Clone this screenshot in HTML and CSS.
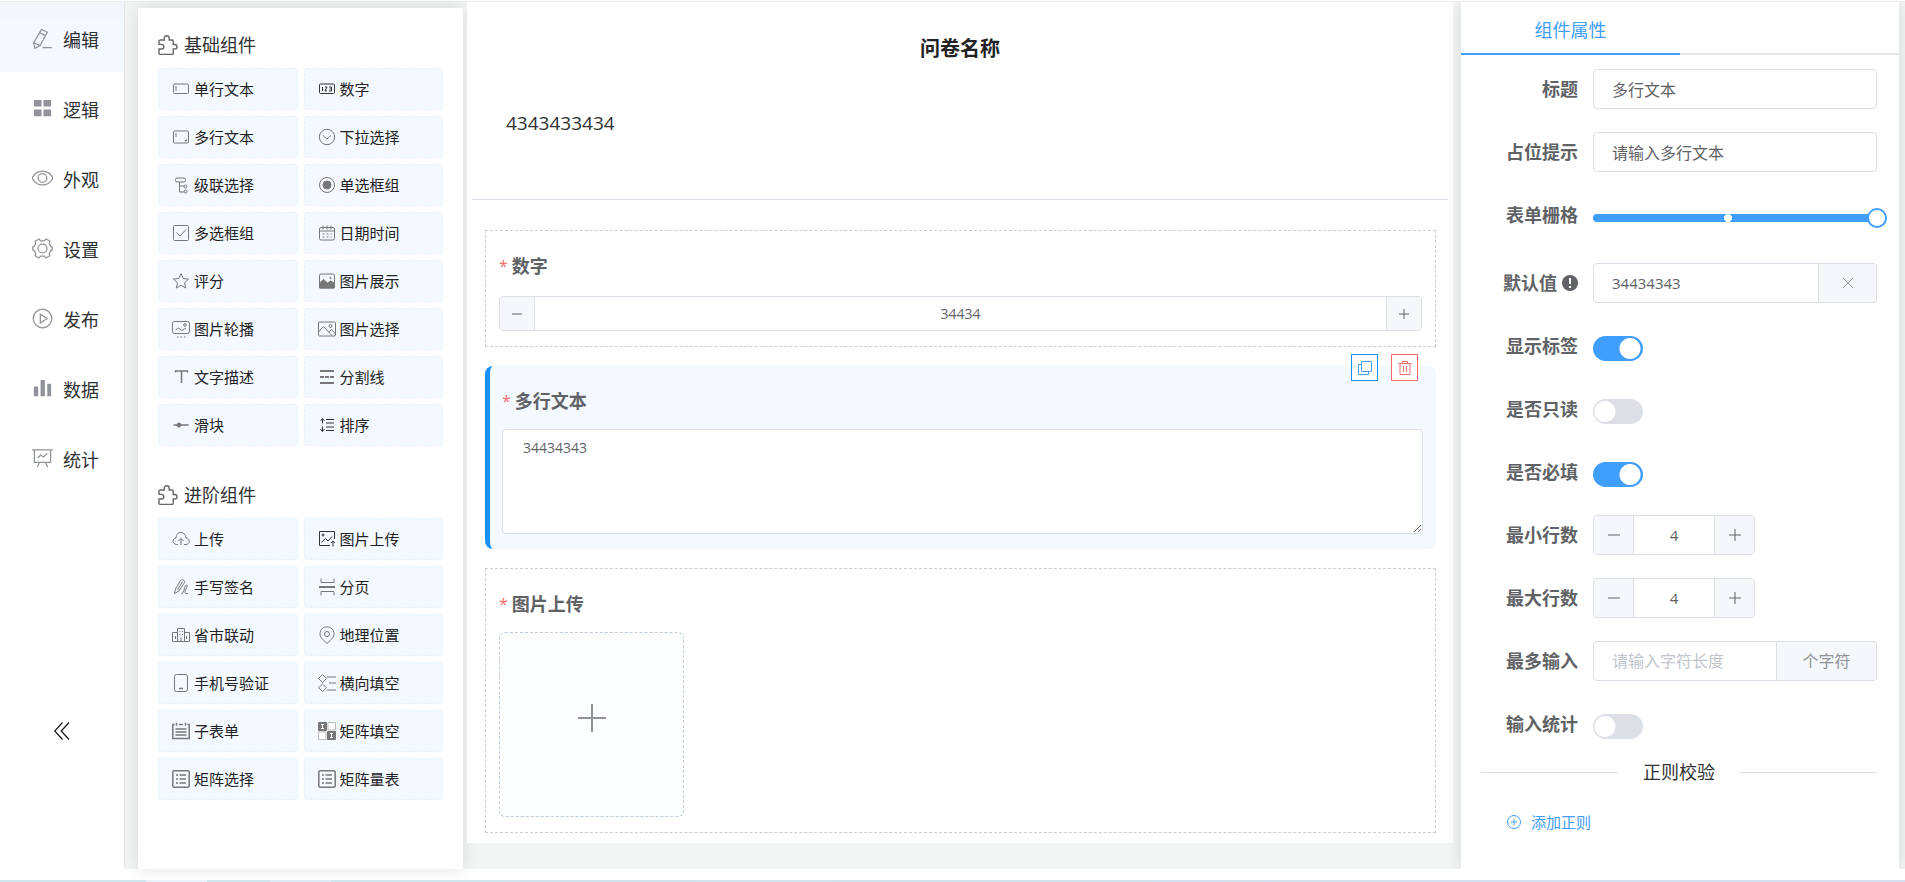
FILE: index.html
```html
<!DOCTYPE html>
<html lang="zh-CN">
<head>
<meta charset="utf-8">
<meta name="viewport" content="width=device-width, initial-scale=1">
<title>问卷名称</title>
<link rel="stylesheet" href="styles.css">
</head>
<body>
<div class="app">
  <aside class="sidebar">
    <nav class="nav">
      <a class="nav-item active" href="#edit"><svg class="nav-icon" viewBox="0 0 22 22"><path d="M10 1.500l6 3L8.500 18.500 3 21.300 1.700 15.500zM8.200 5l6 3M1.700 15.500l6.800 3M11 20.500h10"/></svg>编辑</a>
      <a class="nav-item" href="#logic"><svg class="nav-icon solid" viewBox="0 0 22 22"><path d="M2 2h8v7H2zM12 2h8v7h-8zM2 12h8v7H2zM12 12h8v7h-8z"/></svg>逻辑</a>
      <a class="nav-item" href="#look"><svg class="nav-icon" viewBox="0 0 22 22"><path d="M0 10.500C5 .8 17 .8 22 10.500 17 20.200 5 20.200 0 10.500z"/><circle cx="11" cy="10.500" r="4.500"/></svg>外观</a>
      <a class="nav-item" href="#settings"><svg class="nav-icon" viewBox="0 0 22 22"><path d="M7.300 1l1.700 2h4l1.700-2 4.100 2.400-.8 2.400 1.700 3 1.500.7v3l-1.500.7-1.700 3 .8 2.400L14.700 21 13 19H9l-1.700 2-4.100-2.400.8-2.400-1.700-3L.8 12.500v-3l1.500-.7 1.700-3-.8-2.400z"/><circle cx="11" cy="11" r="4.700"/></svg>设置</a>
      <a class="nav-item" href="#publish"><svg class="nav-icon" viewBox="0 0 22 22"><circle cx="11" cy="11" r="9.700"/><path d="M8.700 6.500v9L16 11z"/></svg>发布</a>
      <a class="nav-item" href="#data"><svg class="nav-icon solid" viewBox="0 0 22 22"><path d="M2 9h4.500v10H2zM9 2h4.500v17H9zM16 6h4v13h-4z"/></svg>数据</a>
      <a class="nav-item" href="#stats"><svg class="nav-icon" viewBox="0 0 22 22"><path d="M0 2h22M2.500 2v13h17V2M8 15l-2.500 5M14 15l2.500 5M6 10.500l3-3 3 2 4-4"/></svg>统计</a>
    </nav>
    <button class="collapse" type="button" aria-label="收起"><svg viewBox="0 0 16 18"><path d="M8.500 0.500L0.700 9l7.800 8.500M15 .5L7.200 9l7.800 8.500"/></svg></button>
  </aside>

  <section class="palette">
    <h2 class="palette-title"><svg viewBox="0 0 20 20"><path d="M2.500 5H6.200V3.200a2.500 2.500 0 0 1 5 0V5H14a1.200 1.200 0 0 1 1.200 1.200V9.500h1.600a2.200 2.200 0 0 1 0 4.400h-1.600v4.300A1.200 1.200 0 0 1 14 19.400H2.300A1.200 1.200 0 0 1 1 18.200V14h2.500a2.300 2.300 0 0 0 0-4.600H1V6.200A1.200 1.200 0 0 1 2.500 5z"/></svg>基础组件</h2>
    <div class="palette-grid">
      <button class="widget" type="button"><svg viewBox="0 0 18 18"><rect x="1.500" y="4" width="15" height="9.500" rx="1"/><path d="M4 6v5"/></svg>单行文本</button>
      <button class="widget" type="button"><svg class="dark" viewBox="0 0 18 18"><rect x="1.500" y="4" width="15" height="9.500" rx="1"/><path d="M4.500 7v4M7 7h2l-2 4h2M11 7h2.500v4H11M11.500 9h2"/></svg>数字</button>
      <button class="widget" type="button"><svg viewBox="0 0 18 18"><rect x="1.500" y="3" width="15" height="12" rx="1"/><path d="M4 5v4M13 13l1.500-1.500V13z"/></svg>多行文本</button>
      <button class="widget" type="button"><svg viewBox="0 0 18 18"><circle cx="9" cy="9" r="7.700"/><path d="M5 7.500l4 3.500 4-3.500"/></svg>下拉选择</button>
      <button class="widget" type="button"><svg viewBox="0 0 18 18"><rect x="3.500" y="2" width="10" height="4" rx="1.500"/><path d="M7.500 6v10h5M7.500 10h5"/><circle cx="13.500" cy="10.500" r="1.500"/><circle cx="13.500" cy="15.500" r="1.500"/></svg>级联选择</button>
      <button class="widget" type="button"><svg viewBox="0 0 18 18"><circle cx="9" cy="9" r="7.500"/><circle class="fill" cx="9" cy="9" r="4"/></svg>单选框组</button>
      <button class="widget" type="button"><svg viewBox="0 0 18 18"><rect x="1.500" y="1.500" width="15" height="15" rx="1"/><path d="M4.500 8.500l3.500 3.500 6-6.500"/></svg>多选框组</button>
      <button class="widget" type="button"><svg viewBox="0 0 18 18"><rect x="1.500" y="3.500" width="15" height="12.500" rx="1.500"/><path d="M1.500 7h15M5 1.500v4M13 1.500v4M9 1.500v4"/><path stroke-dasharray="2 2" d="M4.500 10h9M4.500 13h9"/></svg>日期时间</button>
      <button class="widget" type="button"><svg viewBox="0 0 18 18"><path d="M9 1.500l2.200 5 5.300.6-4 3.600 1.200 5.300L9 13.300 4.300 16l1.200-5.300-4-3.600 5.300-.6z"/></svg>评分</button>
      <button class="widget" type="button"><svg viewBox="0 0 18 18"><rect x="1.500" y="2" width="15" height="14" rx="1.500"/><path class="fill" d="M1.500 11l4-3.500 4 3.500 3-2 4 2v5h-15z"/><circle cx="12.500" cy="6" r=".7"/></svg>图片展示</button>
      <button class="widget" type="button"><svg viewBox="0 0 18 18"><rect x=".5" y="1.500" width="17" height="12" rx="2"/><path d="M3.500 10l3-2 3.500 2.500 4-2.500M5 17h1.500M8.500 17H10M12 17h1.500"/><circle cx="13" cy="5" r="1.300"/></svg>图片轮播</button>
      <button class="widget" type="button"><svg viewBox="0 0 18 18"><rect x=".5" y="2" width="17" height="14" rx="1"/><path d="M.5 12l5-5.500 8.500 9M11 12l2.500-2.500 4 4.500"/><circle cx="12.500" cy="6" r="1.500"/></svg>图片选择</button>
      <button class="widget" type="button"><svg viewBox="0 0 18 18"><path stroke-width="1.500" d="M3 3h13M9.500 3v12M3.500 2.500v2M15.500 2.500v2"/></svg>文字描述</button>
      <button class="widget" type="button"><svg viewBox="0 0 18 18"><path stroke-width="2" d="M2 3h14M2 15h14"/><path stroke-width="2" stroke-dasharray="4 1" d="M2 9h14"/></svg>分割线</button>
      <button class="widget" type="button"><svg viewBox="0 0 18 18"><path stroke-width="1.500" d="M1.500 9h15"/><circle class="fill" cx="7" cy="9" r="2"/></svg>滑块</button>
      <button class="widget" type="button"><svg class="dark" viewBox="0 0 18 18"><path d="M4.500 3v4.500M4.500 10.500V15M2.500 5l2-2.500 2 2.500M2.500 13l2 2.500 2-2.500M8 3.500h8M8 7h8M8 11h8M8 14.500h8"/></svg>排序</button>
    </div>
    <h2 class="palette-title"><svg viewBox="0 0 20 20"><path d="M2.500 5H6.200V3.200a2.500 2.500 0 0 1 5 0V5H14a1.200 1.200 0 0 1 1.200 1.200V9.500h1.600a2.200 2.200 0 0 1 0 4.400h-1.600v4.300A1.200 1.200 0 0 1 14 19.400H2.300A1.200 1.200 0 0 1 1 18.200V14h2.500a2.300 2.300 0 0 0 0-4.600H1V6.200A1.200 1.200 0 0 1 2.500 5z"/></svg>进阶组件</h2>
    <div class="palette-grid">
      <button class="widget" type="button"><svg viewBox="0 0 18 18"><path d="M6 14.500H4.500C0 14 0 8.500 4 8 4 .5 13.500.5 14 8c4.500.5 4.500 6 0 6.500h-2M9 15V8.500M6.500 11L9 8.500l2.500 2.500"/></svg>上传</button>
      <button class="widget" type="button"><svg class="dark" viewBox="0 0 18 18"><path d="M12 15.500H1.500v-14h15V9M3.500 12.500l4-4 2.500 2.500 4-4.500M15 16.500v-5M13 13l2-2 2 2"/><circle cx="5" cy="5" r="1"/></svg>图片上传</button>
      <button class="widget" type="button"><svg viewBox="0 0 18 18"><path d="M2.500 15.500L3.500 11 8.500 2.500c1-2 5 0 4 2L7 13zM5.500 12l5-8.500M9 16c4-1 3-10 6-9 1.500 1-4 7-1.500 8.500H16"/></svg>手写签名</button>
      <button class="widget" type="button"><svg viewBox="0 0 18 18"><path d="M3 .5v4h13v-4M3 17.500v-4h13v4"/><path stroke-width="2" d="M1 9h16"/></svg>分页</button>
      <button class="widget" type="button"><svg viewBox="0 0 18 18"><path d="M5.500 15.500v-13h7v13M.5 15.500h17V6.500h-5M5.500 6.500h-5v9M3.500 10v3M14.500 10v3M7.500 5.500h1M10 5.500h1M7.500 8.500h1M10 8.500h1M9 11.500v4"/></svg>省市联动</button>
      <button class="widget" type="button"><svg viewBox="0 0 18 18"><path d="M9 17.500C4 13 2 11 2 8 2-1.500 16-1.500 16 8c0 3-2 5-7 9.500z"/><circle cx="9" cy="8" r="2.500"/></svg>地理位置</button>
      <button class="widget" type="button"><svg viewBox="0 0 18 18"><rect x="2.500" y=".5" width="13" height="17" rx="2"/><path stroke-width="1.500" d="M7 14.500h4"/></svg>手机号验证</button>
      <button class="widget" type="button"><svg viewBox="0 0 18 18"><path d="M4.500.5l4 4-4 4-4-4zM4.500 10l4 3.700-4 3.800-4-3.800zM9 3h9M11 9h7M9 16h9"/></svg>横向填空</button>
      <button class="widget" type="button"><svg viewBox="0 0 18 18"><path stroke-width="1.500" d="M2.500 2.500H.8v14h16.400v-14h-1.700M7 2.500h4M4.500.8v3M13.500.8v3M3.500 7h11M3.500 10h11M3.500 13h11"/></svg>子表单</button>
      <button class="widget" type="button"><svg viewBox="0 0 18 18"><path class="fill" d="M.5.5h8v8h-8zM9.500 9.500h8v8h-8z"/><path class="faint" d="M10 .5h7.500V8H10zM.5 10H8v7.500H.5z"/><path class="light" d="M3 2.500h3M4.500 2.500v4M3 6.500h3M12 11.500h3M13.500 11.500v4M12 15.500h3"/></svg>矩阵填空</button>
      <button class="widget" type="button"><svg viewBox="0 0 18 18"><rect x=".8" y=".8" width="16.400" height="16.400" rx="1.500" stroke-width="1.500"/><path stroke-width="1.500" d="M4 5h2M7.500 5H14M4 9h2M7.500 9H14M4 13h2M7.500 13H14"/></svg>矩阵选择</button>
      <button class="widget" type="button"><svg viewBox="0 0 18 18"><rect x=".8" y=".8" width="16.400" height="16.400" rx="1.500" stroke-width="1.500"/><path stroke-width="1.500" d="M4 5h2M7.500 5H14M4 9h2M7.500 9H14M4 13h2M7.500 13H14"/></svg>矩阵量表</button>
    </div>
  </section>

  <main class="canvas">
    <h1 class="survey-title">问卷名称</h1>
    <p class="survey-desc">4343433434</p>
    <div class="questions">
      <div class="question">
        <label class="question-label" for="q-number"><span class="star">*</span>数字</label>
        <div class="stepper wide">
          <button type="button" aria-label="减少"><svg viewBox="0 0 14 14"><path d="M2 7h10"/></svg></button>
          <input id="q-number" type="text" value="34434">
          <button type="button" aria-label="增加"><svg viewBox="0 0 14 14"><path d="M2 7h10M7 2v10"/></svg></button>
        </div>
      </div>
      <div class="question selected">
        <div class="question-tools">
          <button class="tool" type="button" aria-label="复制"><svg viewBox="0 0 14 14"><rect x="3.500" y=".5" width="10" height="10" rx=".5"/><path d="M3.500 3.500h-3v10h10v-3"/></svg></button>
          <button class="tool danger" type="button" aria-label="删除"><svg viewBox="0 0 14 14"><path d="M.5 2.500h13M4.500 2.500v-2h5v2M2 2.500v11h10v-11M5.500 5v6M8.500 5v6"/></svg></button>
        </div>
        <label class="question-label" for="q-text"><span class="star">*</span>多行文本</label>
        <textarea id="q-text" class="textarea" rows="4">34434343</textarea>
      </div>
      <div class="question">
        <div class="question-label"><span class="star">*</span>图片上传</div>
        <button class="upload" type="button" aria-label="图片上传"><svg viewBox="0 0 28 28"><path d="M0 14h28M14 0v28"/></svg></button>
      </div>
    </div>
  </main>

  <aside class="props">
    <div class="tabs"><button class="tab" type="button">组件属性</button></div>
    <form class="form">
      <div class="row"><label class="row-label" for="p-title">标题</label><input class="input" id="p-title" type="text" value="多行文本"></div>
      <div class="row"><label class="row-label" for="p-ph">占位提示</label><input class="input" id="p-ph" type="text" value="请输入多行文本"></div>
      <div class="row row-slider"><label class="row-label" for="p-grid">表单栅格</label><div class="slider"><input id="p-grid" type="range" min="1" max="24" value="24"></div></div>
      <div class="row"><label class="row-label" for="p-default">默认值<svg class="info" viewBox="0 0 16 16"><circle cx="8" cy="8" r="8"/><path d="M8 3v6M8 11v2"/></svg></label><div class="group"><input class="input" id="p-default" type="text" value="34434343"><button class="addon clear" type="button" aria-label="清空"><svg viewBox="0 0 14 14"><path d="M2 2l10 10M12 2L2 12"/></svg></button></div></div>
      <div class="row"><label class="row-label" for="p-show">显示标签</label><input class="switch" id="p-show" type="checkbox" checked></div>
      <div class="row"><label class="row-label" for="p-read">是否只读</label><input class="switch" id="p-read" type="checkbox"></div>
      <div class="row"><label class="row-label" for="p-req">是否必填</label><input class="switch" id="p-req" type="checkbox" checked></div>
      <div class="row"><label class="row-label" for="p-min">最小行数</label>
        <div class="stepper small"><button type="button" aria-label="减少"><svg viewBox="0 0 14 14"><path d="M1 7h12"/></svg></button><input id="p-min" type="text" value="4"><button type="button" aria-label="增加"><svg viewBox="0 0 14 14"><path d="M1 7h12M7 1v12"/></svg></button></div></div>
      <div class="row"><label class="row-label" for="p-max">最大行数</label>
        <div class="stepper small"><button type="button" aria-label="减少"><svg viewBox="0 0 14 14"><path d="M1 7h12"/></svg></button><input id="p-max" type="text" value="4"><button type="button" aria-label="增加"><svg viewBox="0 0 14 14"><path d="M1 7h12M7 1v12"/></svg></button></div></div>
      <div class="row"><label class="row-label" for="p-len">最多输入</label><div class="group"><input class="input" id="p-len" type="text" placeholder="请输入字符长度"><span class="addon unit">个字符</span></div></div>
      <div class="row"><label class="row-label" for="p-count">输入统计</label><input class="switch" id="p-count" type="checkbox"></div>
      <div class="divider">正则校验</div>
      <button class="add" type="button"><svg viewBox="0 0 14 14"><circle cx="7" cy="7" r="6.500"/><path d="M7 4v6M4 7h6"/></svg>添加正则</button>
    </form>
  </aside>
</div>
<footer class="edge"></footer>
</body>
</html>
```
FILE: styles.css
```css
* { box-sizing: border-box; }

body {
  margin: 0;
  min-height: 100vh;
  display: flex;
  flex-direction: column;
  font-family: "Open Sans", "Noto Sans CJK SC", sans-serif;
  font-size: 16px;
  line-height: 24px;
  color: #303133;
  background: #fff;
}

button, input, textarea { font: inherit; color: inherit; margin: 0; }
button { cursor: pointer; }
svg { display: block; flex: none; fill: none; stroke: currentColor; }
h1, h2, p { margin: 0; }

.app {
  flex: 1;
  display: flex;
  margin-top: 1px;
  margin-bottom: 11px;
  border-top: 1px solid #eceeee;
  background: #f3f5f4;
}

.edge {
  height: 2px;
  background: linear-gradient(90deg, #cfe4ec 146px, #e9f2f9 146px 207px, #cfe4ec 207px 270px, #dcebf4 270px 331px, #cfe4ec 331px, #d5dfed);
}

/* sidebar */
.sidebar {
  flex: none;
  width: 125px;
  display: flex;
  flex-direction: column;
  justify-content: space-between;
  align-items: stretch;
  padding-bottom: 126px;
  background: #fff;
  border-right: 1px solid #e4e6e6;
}
.nav-item {
  display: flex;
  align-items: center;
  gap: 10px;
  height: 70px;
  padding: 6px 0 0 32px;
  font-size: 18px;
  color: #303133;
  text-decoration: none;
}
.nav-item.active { background: linear-gradient(#f1f4f9, #f4f8ff 20px); }
.nav-icon { width: 21px; height: 21px; margin-bottom: 4px; color: #909399; stroke-width: 1.3; }
.nav-icon.solid { fill: currentColor; stroke: none; }
.collapse {
  align-self: center;
  height: 24px;
  padding: 0;
  border: 0;
  background: none;
  color: #111;
}
.collapse svg { width: 16px; height: 18px; stroke-width: 1.2; }

/* component palette */
.palette {
  flex: none;
  width: 325px;
  margin: 6px 4px 0 13px;
  padding: 24px 20px 0;
  background: #fff;
  box-shadow: 0 0 15px rgba(0, 0, 0, .12);
}
.palette-title {
  display: flex;
  align-items: center;
  gap: 6px;
  height: 26px;
  margin-bottom: 10px;
  font-size: 18px;
  font-weight: 400;
}
.palette-title svg { width: 20px; height: 20px; color: #666; stroke-width: 1.4; }
.palette-grid {
  display: grid;
  grid-template-columns: 1fr 1fr;
  gap: 6px;
  margin-bottom: 36px;
}
.widget {
  display: flex;
  align-items: center;
  gap: 4px;
  height: 42px;
  padding: 0 0 0 13px;
  border: 1px dashed #e4f1ff;
  border-radius: 4px;
  background: #f4f8ff;
  font-size: 15px;
  color: #222;
  white-space: nowrap;
}
.widget svg { width: 18px; height: 18px; color: #777; }
.widget svg.dark { color: #333; }
.widget .fill { fill: currentColor; }
.widget .light { stroke: #fff; }
.widget .faint { stroke: #bbb; fill: #fff; }

/* canvas */
.canvas {
  position: relative;
  flex: 1;
  min-width: 0;
  align-self: flex-start;
  padding: 33px 5px 10px;
  background: #fff;
}
.survey-title {
  font-size: 20px;
  line-height: 28px;
  font-weight: 700;
  text-align: center;
  color: #222;
}
.survey-desc {
  height: 137px;
  padding: 46px 34px 0;
  border-bottom: 1px solid #dcdfe6;
  font-size: 19px;
  line-height: 28px;
}
.questions {
  display: flex;
  flex-direction: column;
  gap: 19px;
  padding: 30px 12px 0 13px;
}
.question {
  position: relative;
  padding: 21px 13px 15px;
  border: 1px dashed #ccc;
}
.question.selected {
  padding: 21px 13px 15px 12px;
  border: 0;
  border-left: 5px solid #1890ff;
  border-radius: 8px;
  background: #f4f8ff;
}
.question-label {
  display: flex;
  gap: 4px;
  margin-bottom: 14px;
  font-size: 18px;
  line-height: 28px;
  font-weight: 700;
  color: #606266;
}
.star { font-size: 16px; font-weight: 400; color: #f56c6c; }

.stepper {
  display: flex;
  height: 35px;
  border: 1px solid #dcdfe6;
  border-radius: 4px;
  background: #fff;
  overflow: hidden;
  color: #606266;
  font-size: 14px;
}
.stepper.wide { margin-top: 16px; }
.stepper button {
  flex: none;
  display: grid;
  place-items: center;
  width: 34px;
  padding: 0;
  border: 0;
  background: #f5f7fa;
}
.stepper svg { width: 14px; height: 14px; }
.stepper input {
  flex: 1;
  min-width: 0;
  padding: 0;
  border: 1px solid #dcdfe6;
  border-width: 0 1px;
  text-align: center;
  background: #fff;
}
.stepper.small { flex: none; width: 162px; height: 40px; font-size: 15px; }
.stepper.small button { width: 39px; }

.textarea {
  display: block;
  width: 100%;
  height: 105px;
  padding: 6px 20px;
  border: 1px solid #dcdfe6;
  border-radius: 4px;
  font-size: 14px;
  color: #606266;
  resize: vertical;
}
.question-tools {
  position: absolute;
  top: -12px;
  right: 18px;
  display: flex;
  gap: 13px;
}
.tool {
  display: grid;
  place-items: center;
  width: 27px;
  height: 27px;
  padding: 0;
  border: 1px solid #1890ff;
  background: #fff;
  color: #409eff;
}
.tool.danger { border-color: #f56c6c; color: #f56c6c; }
.tool svg { width: 14px; height: 14px; }
.upload {
  display: flex;
  justify-content: center;
  align-items: center;
  width: 185px;
  height: 185px;
  padding: 0 0 14px;
  border: 1px dashed #c0ccda;
  border-radius: 6px;
  background: #fbfdff;
  color: #8c939d;
}
.upload svg { width: 28px; height: 28px; stroke-width: 2; }

/* property panel */
.props {
  position: relative;
  flex: none;
  width: 438px;
  margin: 0 6px 0 8px;
  background: #fff;
  box-shadow: 0 0 15px rgba(0, 0, 0, .12);
  clip-path: inset(0 -6px 0 -20px);
}
.tabs { border-bottom: 2px solid #e4e7ed; }
.tab {
  width: 50%;
  height: 53px;
  margin-bottom: -2px;
  padding: 4px 0 0;
  border: 0;
  border-bottom: 2px solid #409eff;
  background: none;
  font-size: 18px;
  color: #409eff;
  vertical-align: top;
}
.form {
  display: flex;
  flex-direction: column;
  gap: 23px;
  padding: 14px 22px 34px 20px;
}
.row { display: flex; align-items: center; min-height: 40px; gap: 15px; }
.row-slider { height: 45px; }
.row-slider .row-label { align-self: flex-start; margin-top: 8px; }
.row-label {
  flex: none;
  width: 97px;
  display: flex;
  justify-content: flex-end;
  align-items: center;
  gap: 5px;
  font-size: 18px;
  font-weight: 700;
  color: #606266;
  white-space: nowrap;
}
.info { width: 16px; height: 16px; fill: #606266; stroke: none; }
.info path { stroke: #fff; stroke-width: 2; }
.input {
  flex: 1;
  min-width: 0;
  height: 40px;
  padding: 0 18px;
  border: 1px solid #dcdfe6;
  border-radius: 4px;
  background: #fff;
  font-size: 16px;
  color: #606266;
}
.input::placeholder { color: #c0c4cc; opacity: 1; }
.group { flex: 1; min-width: 0; display: flex; }
.group .input { border-radius: 4px 0 0 4px; }
#p-default { font-size: 15px; }
.addon {
  flex: none;
  display: grid;
  place-items: center;
  height: 40px;
  border: 1px solid #dcdfe6;
  border-left: 0;
  border-radius: 0 4px 4px 0;
  background: #f5f7fa;
  color: #909399;
}
.clear { width: 58px; padding: 0; }
.clear svg { width: 14px; height: 14px; }
.unit { width: 100px; }

.slider {
  flex: 1;
  display: flex;
  align-items: center;
  height: 8px;
  border-radius: 4px;
  background: radial-gradient(circle at 135px 4px, #fff 4px, #409eff 4px);
}
.slider input {
  flex: 1;
  height: 20px;
  margin: 0 -10px;
  appearance: none;
  background: none;
}
.slider input::-webkit-slider-thumb {
  appearance: none;
  width: 20px;
  height: 20px;
  border: 2px solid #409eff;
  border-radius: 50%;
  background: #fff;
}

.switch {
  appearance: none;
  width: 50px;
  height: 25px;
  margin-top: 4px;
  border-radius: 13px;
  background: radial-gradient(circle at 12px 50%, #fff 10px, #dcdfe6 11px);
}
.switch:checked { background: radial-gradient(circle at 37px 50%, #fff 10px, #409eff 11px); }

.divider {
  display: flex;
  align-items: center;
  gap: 25px;
  height: 24px;
  margin-top: -7px;
  font-size: 18px;
}
.divider::before, .divider::after {
  content: "";
  flex: 1;
  height: 1px;
  background: #dcdfe6;
}
.add {
  align-self: flex-start;
  display: flex;
  align-items: center;
  gap: 10px;
  margin-left: 26px;
  margin-top: 3px;
  padding: 0;
  border: 0;
  background: none;
  font-size: 15px;
  color: #409eff;
}
.add svg { width: 14px; height: 14px; }
```
